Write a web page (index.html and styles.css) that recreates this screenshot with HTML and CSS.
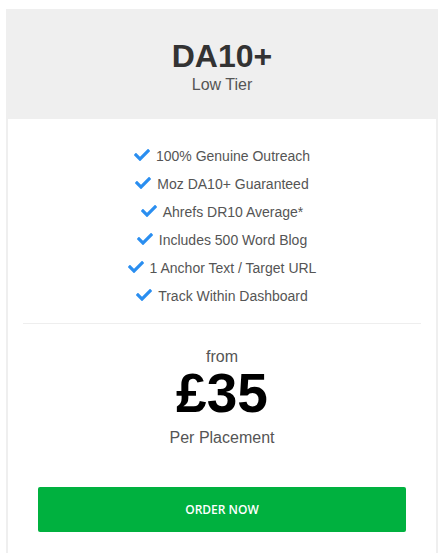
FILE: index.html
```html
<!DOCTYPE html>
<html>
<head>
<meta charset="utf-8">
<link rel="stylesheet" href="styles.css">
</head>
<body>
<div class="card">
  <div class="card-head">
    <div class="title">DA10+</div>
    <div class="subtitle">Low Tier</div>
  </div>
  <div class="card-body">
    <ul class="features">
      <li><svg class="check" viewBox="0 0 512 512"><path d="M173.898 439.404l-166.4-166.4c-9.997-9.997-9.997-26.206 0-36.204l36.203-36.204c9.997-9.998 26.207-9.998 36.204 0L192 312.69 432.095 72.596c9.997-9.997 26.207-9.997 36.204 0l36.203 36.204c9.997 9.997 9.997 26.206 0 36.204l-294.4 294.401c-9.998 9.997-26.207 9.997-36.204-.001z"/></svg>100% Genuine Outreach</li>
      <li><svg class="check" viewBox="0 0 512 512"><path d="M173.898 439.404l-166.4-166.4c-9.997-9.997-9.997-26.206 0-36.204l36.203-36.204c9.997-9.998 26.207-9.998 36.204 0L192 312.69 432.095 72.596c9.997-9.997 26.207-9.997 36.204 0l36.203 36.204c9.997 9.997 9.997 26.206 0 36.204l-294.4 294.401c-9.998 9.997-26.207 9.997-36.204-.001z"/></svg>Moz DA10+ Guaranteed</li>
      <li><svg class="check" viewBox="0 0 512 512"><path d="M173.898 439.404l-166.4-166.4c-9.997-9.997-9.997-26.206 0-36.204l36.203-36.204c9.997-9.998 26.207-9.998 36.204 0L192 312.69 432.095 72.596c9.997-9.997 26.207-9.997 36.204 0l36.203 36.204c9.997 9.997 9.997 26.206 0 36.204l-294.4 294.401c-9.998 9.997-26.207 9.997-36.204-.001z"/></svg>Ahrefs DR10 Average*</li>
      <li><svg class="check" viewBox="0 0 512 512"><path d="M173.898 439.404l-166.4-166.4c-9.997-9.997-9.997-26.206 0-36.204l36.203-36.204c9.997-9.998 26.207-9.998 36.204 0L192 312.69 432.095 72.596c9.997-9.997 26.207-9.997 36.204 0l36.203 36.204c9.997 9.997 9.997 26.206 0 36.204l-294.4 294.401c-9.998 9.997-26.207 9.997-36.204-.001z"/></svg>Includes 500 Word Blog</li>
      <li><svg class="check" viewBox="0 0 512 512"><path d="M173.898 439.404l-166.4-166.4c-9.997-9.997-9.997-26.206 0-36.204l36.203-36.204c9.997-9.998 26.207-9.998 36.204 0L192 312.69 432.095 72.596c9.997-9.997 26.207-9.997 36.204 0l36.203 36.204c9.997 9.997 9.997 26.206 0 36.204l-294.4 294.401c-9.998 9.997-26.207 9.997-36.204-.001z"/></svg>1 Anchor Text / Target URL</li>
      <li><svg class="check" viewBox="0 0 512 512"><path d="M173.898 439.404l-166.4-166.4c-9.997-9.997-9.997-26.206 0-36.204l36.203-36.204c9.997-9.998 26.207-9.998 36.204 0L192 312.69 432.095 72.596c9.997-9.997 26.207-9.997 36.204 0l36.203 36.204c9.997 9.997 9.997 26.206 0 36.204l-294.4 294.401c-9.998 9.997-26.207 9.997-36.204-.001z"/></svg>Track Within Dashboard</li>
    </ul>
    <div class="divider"></div>
    <div class="price">
      <div class="from">from</div>
      <div class="amount">£35</div>
      <div class="per">Per Placement</div>
    </div>
    <a class="order" href="#">ORDER NOW</a>
  </div>
</div>
</body>
</html>
```

FILE: styles.css
```css
html, body {
  margin: 0;
  padding: 0;
  background: #ffffff;
}
body {
  padding: 9px 3px 0 6px;
  font-family: "Liberation Sans", Arial, sans-serif;
}
.card {
  width: 432px;
  box-sizing: border-box;
  border: 2px solid #efefef;
  border-top: none;
  border-bottom: none;
  height: 544px;
}
.card-head {
  background: #efefef;
  margin: 0 -2px;
  height: 110px;
  display: flex;
  flex-direction: column;
  align-items: center;
  padding-top: 33px;
  box-sizing: border-box;
}
.title {
  font-size: 32px;
  font-weight: bold;
  color: #333333;
  line-height: 28px;
}
.subtitle {
  font-size: 16px;
  color: #555555;
  line-height: 20px;
  margin-top: 5px;
}
.card-body {
  padding-top: 23px;
}
.features {
  list-style: none;
  margin: 0;
  padding: 0;
}
.features li {
  display: flex;
  justify-content: center;
  align-items: center;
  height: 28px;
  font-size: 14px;
  color: #555555;
}
.check {
  width: 16px;
  height: 16px;
  fill: #2a8ef0;
  margin-right: 6px;
  margin-top: -3px;
}
.divider {
  height: 1px;
  background: #eeeeee;
  margin: 13px 15px 0 15px;
}
.price {
  display: flex;
  flex-direction: column;
  align-items: center;
  padding-top: 24px;
}
.from {
  font-size: 16px;
  color: #555555;
  line-height: 18px;
}
.amount {
  font-size: 55px;
  font-weight: bold;
  color: #000000;
  line-height: 44px;
  margin-top: 5px;
}
.per {
  font-size: 16px;
  color: #555555;
  line-height: 20px;
  margin-top: 13px;
}
.order {
  display: flex;
  align-items: center;
  justify-content: center;
  margin: 39px 30px 0 30px;
  height: 45px;
  background: #00b13f;
  border-radius: 2px;
  color: #ffffff;
  text-decoration: none;
  font-family: "Open Sans", sans-serif;
  font-weight: 600;
  font-size: 12px;
}
```
